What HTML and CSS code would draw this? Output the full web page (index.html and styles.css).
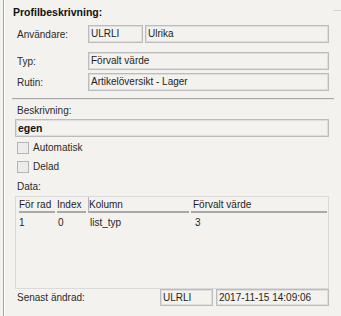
FILE: index.html
```html
<!DOCTYPE html>
<html lang="sv">
<head>
    <meta charset="UTF-8">
    <title>Profilbeskrivning</title>
    <link rel="stylesheet" href="styles.css">
</head>
<body>
    <div class="frame">
        <div class="caption-row">
            <span class="caption">Profilbeskrivning:</span>
        </div>

        <!-- profilens huvuddata -->
        <div class="form">
            <div class="row first">
                <span class="label">Användare:</span>
                <div class="pair">
                    <div class="box short">ULRLI</div>
                    <div class="box grow">Ulrika</div>
                </div>
            </div>
            <div class="row typ">
                <span class="label">Typ:</span>
                <div class="box grow">Förvalt värde</div>
            </div>
            <div class="row rutin">
                <span class="label">Rutin:</span>
                <div class="box grow">Artikelöversikt - Lager</div>
            </div>
        </div>

        <div class="separator"></div>

        <!-- beskrivning -->
        <div class="section">
            <div class="label block">Beskrivning:</div>
            <div class="box wide bold">egen</div>
            <label class="check first-check"><span class="checkbox"></span>Automatisk</label>
            <label class="check"><span class="checkbox"></span>Delad</label>
            <div class="label block data-label">Data:</div>

            <div class="list">
                <div class="list-head">
                    <div class="col c1"><span>För rad</span></div>
                    <div class="col c2"><span>Index</span></div>
                    <div class="col c3"><span>Kolumn</span></div>
                    <div class="col c4"><span>Förvalt värde</span></div>
                </div>
                <div class="list-row">
                    <div class="cell c1">1</div>
                    <div class="cell c2">0</div>
                    <div class="cell c3">list_typ</div>
                    <div class="cell c4">3</div>
                </div>
            </div>

            <div class="footer">
                <span class="label">Senast ändrad:</span>
                <div class="box user">ULRLI</div>
                <div class="box date">2017-11-15 14:09:06</div>
            </div>
        </div>
    </div>
</body>
</html>
```

FILE: styles.css
```css
body {
    margin: 0;
    background: #f4f2ef;
    font-family: "Liberation Sans", Arial, sans-serif;
    font-size: 10px;
    color: #1e1e1e;
}

.frame {
    margin-left: 3px;
    height: 316px;
    border-left: 1px solid #a3a3a3;
    box-shadow: inset 1px 0 0 #ffffff;
    box-sizing: border-box;
    padding-left: 1px;
}

.caption-row {
    display: flex;
    align-items: center;
    height: 20px;
    box-sizing: border-box;
    padding: 3px 0 0 8px;
}

.caption-row::after {
    content: "";
    align-self: flex-start;
    margin-left: auto;
    width: 8px;
    height: 1px;
    margin-top: 7px;
    background: #d2d2d2;
}

.caption {
    font-weight: bold;
    font-size: 10.5px;
    color: #111;
}

.form {
    padding: 0 12px 0 12px;
}

.row {
    display: flex;
    align-items: center;
}

.row.first {
    margin-top: 5px;
}

.row.typ {
    margin-top: 9px;
}

.row.rutin {
    margin-top: 3px;
}

.label {
    width: 71px;
    flex: none;
    color: #2a2a2a;
}

.pair {
    display: flex;
    flex: 1;
    gap: 2px;
}

.box {
    height: 18px;
    box-sizing: border-box;
    border: 1px solid #bcbcbc;
    box-shadow: inset 0 0 0 1px #dedede;
    padding: 0 2px;
    line-height: 16px;
    white-space: nowrap;
    overflow: hidden;
}

.box.short {
    width: 55px;
}

.box.grow {
    flex: 1;
}

.separator {
    margin: 7px 7px 0 7px;
    height: 1px;
    border-top: 1px solid #a9a9a9;
    background: #e6e6e6;
}

.section {
    padding: 0 12px 0 10px;
}

.label.block {
    width: auto;
    margin-top: 4px;
    height: 14px;
    line-height: 14px;
    padding-left: 2px;
}

.box.wide {
    margin-top: 1px;
    height: 18px;
    line-height: 16px;
}

.bold {
    font-weight: bold;
    font-size: 10.5px;
    color: #111;
}

.check {
    display: flex;
    align-items: center;
    height: 19px;
    padding-left: 2px;
    color: #2a2a2a;
}

.first-check {
    margin-top: 1px;
}

.checkbox {
    width: 10px;
    height: 10px;
    border: 1px solid #b4b4b4;
    background: #ececec;
    margin-right: 4px;
}

.data-label {
    margin-top: 7px;
}

.list {
    margin-top: 2px;
    height: 93px;
    box-sizing: border-box;
    border: 1px solid #dadada;
    padding: 0 1px 0 3px;
}

.list-head {
    display: flex;
    height: 16px;
}

.col {
    display: flex;
    align-items: center;
    box-sizing: border-box;
    border-bottom: 2px solid #a8a8a8;
    margin-right: 2px;
    padding-top: 1px;
}

.col.c3 {
    border-left: 1px solid #b4b4b4;
}

.col.c4 {
    flex: 1;
    margin-right: 0;
    padding-left: 2px;
}

.c1 {
    width: 36px;
}

.c2 {
    width: 29px;
}

.c3 {
    width: 101px;
}

.list-row {
    display: flex;
    margin-top: 1px;
    height: 16px;
    align-items: center;
}

.cell {
    margin-right: 2px;
}

.cell.c2 {
    padding-left: 1px;
}

.cell.c3 {
    padding-left: 1px;
}

.cell.c4 {
    flex: 1;
    padding-left: 2px;
}

.footer {
    display: flex;
    align-items: center;
}

.footer .label {
    width: 143px;
    padding-left: 2px;
}

.box.user {
    width: 53px;
    margin-right: 3px;
    height: 17px;
    line-height: 15px;
}

.box.date {
    flex: 1;
    height: 17px;
    line-height: 15px;
}
```
